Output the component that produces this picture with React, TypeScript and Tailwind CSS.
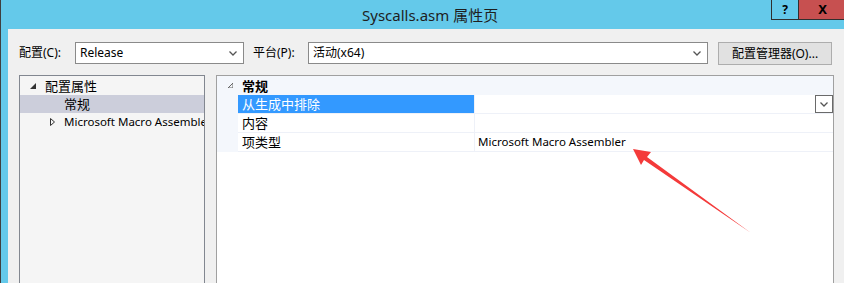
import React from "react";

function Chevron({ className = "" }: { className?: string }) {
  return (
    <svg width="8" height="5" viewBox="0 0 8 5" className={className}>
      <polyline points="0.5,0.5 4,4 7.5,0.5" fill="none" stroke="#555" strokeWidth="1.3" />
    </svg>
  );
}

export default function App() {
  return (
    <div className="relative flex h-[283px] w-[844px] overflow-hidden font-['Noto_Sans','Noto_Sans_CJK_SC',sans-serif] text-[12px] text-black">
      <div className="w-px shrink-0 bg-[#3f3f3f]" />
      <div className="flex flex-1 flex-col bg-[#64c9ea]">
        {/* title bar */}
        <div className="flex h-[29px] shrink-0">
          <div className="flex-1 pl-[361px] pt-[5px] text-[15px] leading-[20px] text-[#1e1e1e]">
            Syscalls.asm 属性页
          </div>
          <div className="flex h-[20px] w-[28px] items-center justify-center border-x border-b border-[#2f2f2f] bg-[#64c9ea] text-[12px] font-bold">
            ?
          </div>
          <div className="flex h-[20px] w-[45px] items-center justify-center border-b border-[#2f2f2f] bg-[#c75050] pl-[2px] text-[13px] font-bold">
            X
          </div>
        </div>
        {/* content */}
        <div className="ml-[7px] flex flex-1 flex-col bg-[#f0f0f0]">
          <div className="mt-[13px] flex h-[23px] items-start text-[12px]">
            <div className="ml-[11px] w-[56px] pt-[3px] leading-[16px]">配置(C):</div>
            <div className="flex h-[22px] w-[169px] items-center justify-between border border-[#8a8a8a] bg-white pl-[4px] pr-[6px]">
              <span className="leading-[16px]">Release</span>
              <Chevron />
            </div>
            <div className="ml-[9px] w-[55px] pt-[3px] leading-[16px]">平台(P):</div>
            <div className="flex h-[22px] w-[400px] items-center justify-between border border-[#8a8a8a] bg-white pl-[4px] pr-[6px]">
              <span className="leading-[16px]">活动(x64)</span>
              <Chevron />
            </div>
            <div className="ml-[10px] flex h-[23px] w-[114px] items-center justify-center border border-[#adadad] bg-[#e1e1e1] leading-[16px]">
              配置管理器(O)...
            </div>
          </div>

          <div className="mt-[10px] flex flex-1">
            {/* left tree */}
            <div className="ml-[11px] w-[186px] border-x border-t border-[#828790] bg-[#f5f5f5] pt-[1px] text-[13px]">
              <div className="flex h-[18px] items-center">
                <svg width="6" height="6" viewBox="0 0 6 6" className="ml-[10px]">
                  <polygon points="6,0 6,6 0,6" fill="#333" />
                </svg>
                <span className="ml-[9px] leading-[18px]">配置属性</span>
              </div>
              <div className="flex h-[18px] items-center bg-[#cccedb]">
                <span className="ml-[44px] leading-[18px]">常规</span>
              </div>
              <div className="flex h-[18px] items-center overflow-hidden whitespace-nowrap">
                <svg width="5" height="8" viewBox="0 0 5 8" className="ml-[30px] shrink-0">
                  <polygon points="0.5,0.5 4.5,4 0.5,7.5" fill="none" stroke="#333" strokeWidth="1" />
                </svg>
                <span className="ml-[9px] text-[11.5px] leading-[18px]">Microsoft Macro Assembler</span>
              </div>
            </div>
            {/* right grid */}
            <div className="ml-[11px] w-[618px] border-x border-t border-[#a0a0a0] bg-white text-[13px]">
              <div className="flex h-[19px] items-center bg-[#f4f7fc]">
                <svg width="5" height="5" viewBox="0 0 5 5" className="ml-[11px]">
                  <polygon points="5,0 5,5 0,5" fill="none" stroke="#666" strokeWidth="1" />
                </svg>
                <span className="ml-[9px] font-bold leading-[18px]">常规</span>
              </div>
              <div className="flex">
                <div className="w-[21px] shrink-0 bg-[#f4f7fc]" />
                <div className="flex flex-1 flex-col">
                  <div className="flex h-[19px] border-b border-[#eef1f8]">
                    <div className="flex w-[236px] items-center bg-[#3399ff] pl-[4px] text-white">
                      <span className="leading-[18px]">从生成中排除</span>
                    </div>
                    <div className="flex flex-1 items-center justify-end border-l border-[#eef1f8]">
                      <div className="flex h-[18px] w-[18px] items-center justify-center border border-[#6a6a6a] bg-white">
                        <Chevron />
                      </div>
                    </div>
                  </div>
                  <div className="flex h-[19px] border-b border-[#eef1f8]">
                    <div className="flex w-[236px] items-center pl-[4px]">
                      <span className="leading-[18px]">内容</span>
                    </div>
                    <div className="flex-1 border-l border-[#eef1f8]" />
                  </div>
                  <div className="flex h-[19px] border-b border-[#eef1f8]">
                    <div className="flex w-[236px] items-center pl-[4px]">
                      <span className="leading-[18px]">项类型</span>
                    </div>
                    <div className="flex flex-1 items-center border-l border-[#eef1f8] pl-[3px] text-[11.5px]">
                      <span className="leading-[18px]">Microsoft Macro Assembler</span>
                    </div>
                  </div>
                </div>
              </div>
            </div>
          </div>
        </div>
      </div>

      {/* red annotation arrow */}
      <svg className="pointer-events-none absolute left-0 top-0" width="844" height="283" viewBox="0 0 844 283">
        <polygon
          points="633,149 651,152 647,157 751,233 644,160 641,165"
          fill="#f43a3a"
        />
      </svg>
    </div>
  );
}
